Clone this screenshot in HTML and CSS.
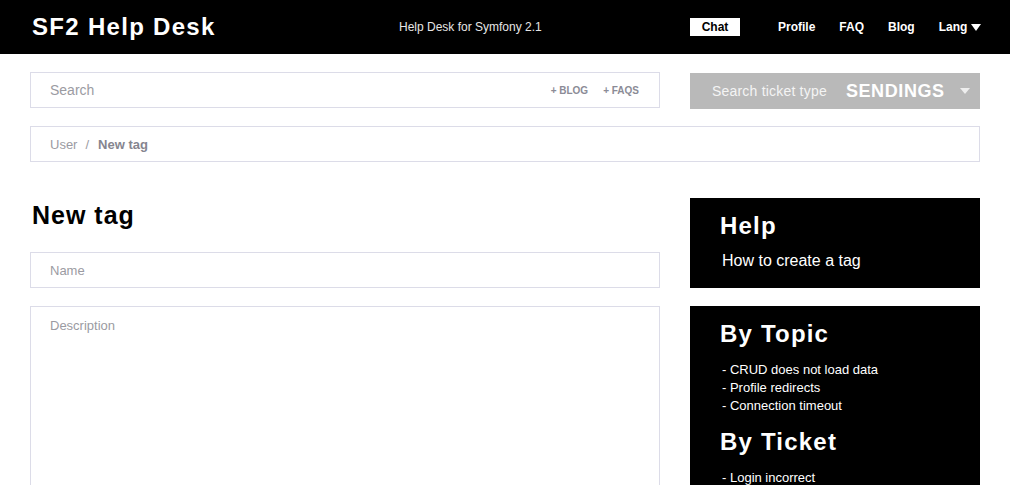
FILE: index.html
```html
<!DOCTYPE html>
<html lang="en">
<head>
<meta charset="utf-8">
<title>SF2 Help Desk</title>
<link rel="stylesheet" href="styles.css">
</head>
<body>
<header class="topbar">
  <div class="brand-area">
    <div class="logo">SF2 Help Desk</div>
    <div class="tagline">Help Desk for Symfony 2.1</div>
  </div>
  <nav class="nav">
    <a class="nav-chat">Chat</a>
    <a class="nav-link">Profile</a>
    <a class="nav-link">FAQ</a>
    <a class="nav-link">Blog</a>
    <a class="nav-link nav-lang">Lang <span class="caret"></span></a>
  </nav>
</header>

<div class="page">
  <div class="search-row">
    <div class="search-box">
      <span class="search-placeholder">Search</span>
      <span class="search-tags"><span>+ BLOG</span><span>+ FAQS</span></span>
    </div>
    <div class="type-select">
      <span class="type-label">Search ticket type</span>
      <span class="type-value">SENDINGS</span>
      <span class="type-caret"></span>
    </div>
  </div>

  <div class="breadcrumb">
    <span class="crumb">User</span><span class="crumb-sep">/</span><span class="crumb-current">New tag</span>
  </div>

  <div class="content">
    <main class="main">
      <h1 class="title">New tag</h1>
      <div class="field">Name</div>
      <div class="field field-area">Description</div>
    </main>
    <aside class="side">
      <section class="panel">
        <h2 class="panel-title">Help</h2>
        <p class="panel-text">How to create a tag</p>
      </section>
      <section class="panel panel-list">
        <h2 class="panel-title">By Topic</h2>
        <ul class="links">
          <li>- CRUD does not load data</li>
          <li>- Profile redirects</li>
          <li>- Connection timeout</li>
        </ul>
        <h2 class="panel-title panel-title-next">By Ticket</h2>
        <ul class="links links-last">
          <li>- Login incorrect</li>
        </ul>
      </section>
    </aside>
  </div>
</div>
</body>
</html>
```

FILE: styles.css
```css
* { box-sizing: border-box; }
html, body { margin: 0; padding: 0; }
body {
  font-family: "Liberation Sans", Arial, sans-serif;
  background: #fff;
  color: #000;
  overflow: hidden;
}

.topbar {
  height: 54px;
  background: #000;
  display: flex;
  align-items: center;
  padding: 0 30px 0 32px;
}
.brand-area {
  width: 658px;
  flex-shrink: 0;
  display: flex;
  align-items: center;
}
.logo {
  width: 367px;
  flex-shrink: 0;
  color: #fff;
  font-weight: bold;
  font-size: 24px;
  letter-spacing: 1.3px;
}
.tagline {
  color: #e6e6e6;
  font-size: 12px;
}
.nav {
  display: flex;
  align-items: center;
  gap: 24px;
  font-size: 12px;
  font-weight: bold;
  color: #fff;
  white-space: nowrap;
}
.nav-chat {
  background: #fff;
  color: #000;
  width: 50px;
  height: 18px;
  line-height: 18px;
  text-align: center;
  margin-right: 14px;
}
.nav-lang { display: flex; align-items: center; }
.caret {
  display: inline-block;
  margin-left: 4px;
  width: 0; height: 0;
  border-left: 5px solid transparent;
  border-right: 5px solid transparent;
  border-top: 7px solid #fff;
}

.page { padding: 0 30px; }

.search-row {
  display: flex;
  gap: 30px;
  margin-top: 18px;
}
.search-box {
  width: 630px;
  height: 36px;
  border: 1px solid #dcdce8;
  display: flex;
  align-items: center;
  justify-content: space-between;
  padding: 0 20px 0 19px;
}
.search-placeholder {
  font-size: 14px;
  color: #9b9ba2;
}
.search-tags {
  display: flex;
  gap: 15px;
  font-size: 10px;
  font-weight: bold;
  color: #8b8b96;
}
.type-select {
  width: 290px;
  height: 36px;
  margin-top: 1px;
  background: #b9b9b9;
  display: flex;
  align-items: center;
  padding-left: 22px;
  color: #fff;
}
.type-label { font-size: 14px; color: #f4f4f4; letter-spacing: 0.2px; }
.type-value {
  margin-left: 19px;
  font-size: 18px;
  font-weight: bold;
  letter-spacing: 0.6px;
}
.type-caret {
  margin-left: 15px;
  width: 0; height: 0;
  border-left: 5px solid transparent;
  border-right: 5px solid transparent;
  border-top: 6px solid #eee;
}

.breadcrumb {
  margin-top: 17px;
  height: 36px;
  border: 1px solid #dcdce8;
  display: flex;
  align-items: center;
  padding-left: 19px;
  font-size: 13px;
}
.crumb { color: #9b9ba2; }
.crumb-sep { color: #9b9ba2; margin: 0 9px 0 8px; }
.crumb-current { color: #85858f; font-weight: bold; }

.content {
  display: flex;
  gap: 30px;
  margin-top: 36px;
}
.main { width: 630px; }
.title {
  margin: 0;
  padding: 2px 0 0 2px;
  font-size: 25px;
  line-height: 30px;
  font-weight: bold;
  letter-spacing: 1px;
}
.field {
  margin-top: 22px;
  height: 36px;
  border: 1px solid #dcdce8;
  padding: 10px 19px 0;
  font-size: 13px;
  line-height: 16px;
  color: #9b9ba2;
}
.field + .field { margin-top: 18px; }
.field-area { height: 220px; padding-top: 11px; }

.side { width: 290px; display: flex; flex-direction: column; gap: 18px; }
.panel {
  background: #000;
  color: #fff;
  padding: 14px 30px 17px;
}
.panel-title {
  margin: 0;
  font-size: 24px;
  line-height: 28px;
  font-weight: bold;
  letter-spacing: 1.2px;
}
.panel-text {
  margin: 11px 0 0 2px;
  font-size: 16px;
  line-height: 20px;
}
.links {
  list-style: none;
  margin: 13px 0 0 2px;
  padding: 0;
  font-size: 13px;
  line-height: 18px;
}
.links-last { margin-bottom: 0; }
.panel-title-next { margin-top: 13px; }
```
